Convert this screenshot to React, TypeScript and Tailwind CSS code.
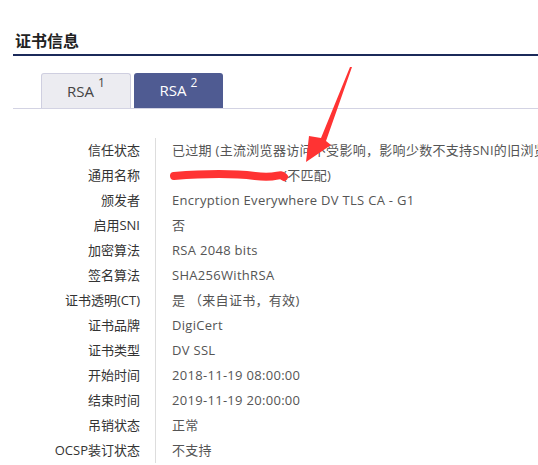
const rows: { label: string; value: React.ReactNode }[] = [
  {
    label: "信任状态",
    value: "已过期 (主流浏览器访问不受影响，影响少数不支持SNI的旧浏览器访问)",
  },
  {
    label: "通用名称",
    value: <span className="inline-block pl-[111px]">(不匹配)</span>,
  },
  { label: "颁发者", value: "Encryption Everywhere DV TLS CA - G1" },
  { label: "启用SNI", value: "否" },
  { label: "加密算法", value: "RSA 2048 bits" },
  { label: "签名算法", value: "SHA256WithRSA" },
  { label: "证书透明(CT)", value: "是 （来自证书，有效)" },
  { label: "证书品牌", value: "DigiCert" },
  { label: "证书类型", value: "DV SSL" },
  { label: "开始时间", value: "2018-11-19 08:00:00" },
  { label: "结束时间", value: "2019-11-19 20:00:00" },
  { label: "吊销状态", value: "正常" },
  { label: "OCSP装订状态", value: "不支持" },
];

export default function App() {
  return (
    <div
      className="relative h-[465px] w-[538px] overflow-hidden bg-white pl-[13px] pt-[31px]"
      style={{ fontFamily: '"Open Sans", "Noto Sans CJK SC", sans-serif' }}
    >
      {/* Heading */}
      <h2 className="border-b-2 border-[#1b2a5a] pb-[2px] pl-[2px] text-[16px] font-bold leading-[21px] text-[#222]">
        证书信息
      </h2>

      {/* Tabs */}
      <div className="mt-[17px] flex gap-[3px] border-b border-[#d3d3e3] pl-[28px]">
        <div className="flex h-[35px] w-[90px] items-center justify-center rounded-t-[3px] border border-b-0 border-[#cfcfe0] bg-[#ececf1] text-[15px] text-[#444]">
          RSA<sup className="ml-[4px] -translate-y-[2px] text-[12px]">1</sup>
        </div>
        <div className="flex h-[35px] w-[89px] items-center justify-center rounded-t-[3px] bg-[#4f5b92] text-[15px] text-white">
          RSA<sup className="ml-[4px] -translate-y-[2px] text-[12px]">2</sup>
        </div>
      </div>

      {/* Detail table */}
      <div className="mt-[29px] text-[13px]">
        {rows.map((row) => (
          <div key={row.label} className="flex h-[25px] items-center">
            <div className="flex h-full w-[143px] shrink-0 items-center justify-end border-r border-[#dddddd] pr-[15px] text-[#333]">
              {row.label}
            </div>
            <div className="whitespace-nowrap pl-[16px] tracking-[0.3px] text-[#555]">
              {row.value}
            </div>
          </div>
        ))}
      </div>

      {/* Annotation overlay */}
      <svg
        className="pointer-events-none absolute left-0 top-0"
        width="538"
        height="465"
        viewBox="0 0 538 465"
      >
        <path
          d="M174 176 C 200 174, 230 173, 255 176 S 278 172, 284 177"
          stroke="#ff3333"
          strokeWidth="8"
          strokeLinecap="round"
          fill="none"
        />
        <polygon
          points="352,67 326,141 331,145 306,162 309,136 321,138 350,67"
          fill="#ff3333"
        />
      </svg>
    </div>
  );
}
